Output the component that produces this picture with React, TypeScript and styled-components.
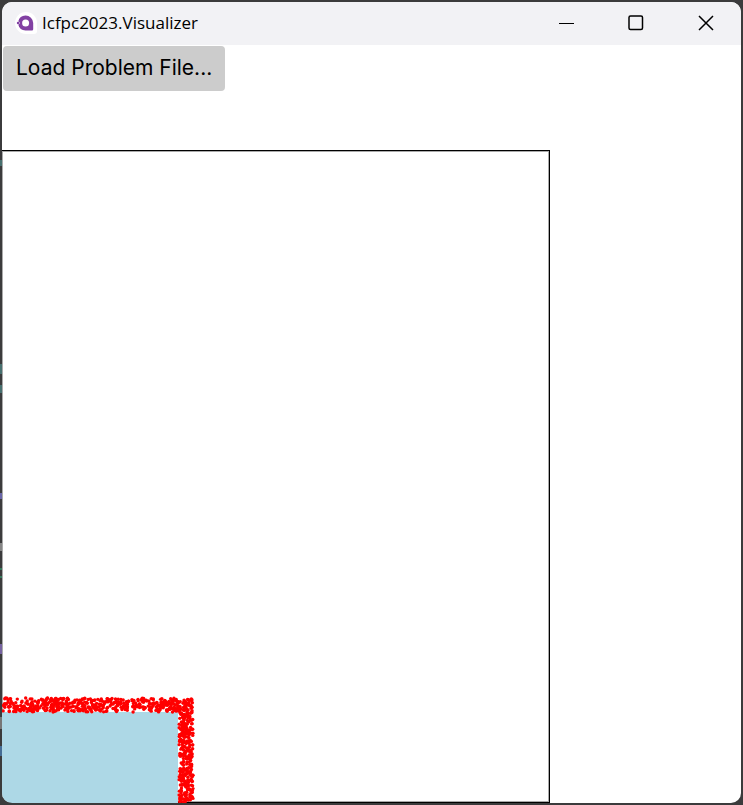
import React from "react";
import styled, { createGlobalStyle } from "styled-components";

const GlobalStyle = createGlobalStyle`
  *, *::before, *::after { box-sizing: border-box; }
  body { margin: 0; background: #3b3b3c; }
`;

const Desktop = styled.div`
  height: 100vh;
  padding: 2px;
  background:
    linear-gradient(#47706f, #47706f) 0 160px / 2px 6px no-repeat,
    linear-gradient(#47706f, #47706f) 0 364px / 2px 10px no-repeat,
    linear-gradient(#47706f, #47706f) 0 385px / 2px 8px no-repeat,
    linear-gradient(#6965a8, #6965a8) 0 493px / 2px 6px no-repeat,
    linear-gradient(#858585, #858585) 0 543px / 2px 8px no-repeat,
    linear-gradient(#367a5c, #367a5c) 0 568px / 2px 2px no-repeat,
    linear-gradient(#367a5c, #367a5c) 0 576px / 2px 2px no-repeat,
    linear-gradient(#7663a0, #7663a0) 0 644px / 2px 10px no-repeat,
    linear-gradient(#777, #777) 0 717px / 2px 12px no-repeat,
    linear-gradient(#456d95, #456d95) 0 746px / 2px 10px no-repeat,
    #3b3b3c;
`;

const Window = styled.main`
  display: flex;
  flex-direction: column;
  height: 100%;
  overflow: hidden;
  border-radius: 10px;
  background: #fff;
  color: #000;
`;

const TitleBar = styled.header`
  display: flex;
  flex: none;
  align-items: center;
  height: 43px;
  padding: 0 0 2px 13px;
  background: #f2f2f5;
`;

const Title = styled.h1`
  flex: 1;
  margin: 0 0 0 5px;
  font: 400 17px/24px "Open Sans", "Noto Sans", sans-serif;
  white-space: nowrap;
`;

const CaptionButton = styled.button`
  display: grid;
  place-items: center;
  width: 70px;
  height: 41px;
  padding: 0;
  border: 0;
  background: transparent;
  color: #000;
`;

const Toolbar = styled.div`
  display: flex;
  flex: none;
  padding: 1px;
`;

const LoadButton = styled.button`
  height: 45px;
  padding: 0 13px 2px;
  border: 0;
  border-radius: 4px;
  background: #ccc;
  color: #000;
  font: 400 21px/28px Inter, sans-serif;
  white-space: nowrap;
`;

const Room = styled.section`
  display: flex;
  flex: 1;
  align-items: flex-end;
  width: 74.2%;
  min-height: 0;
  margin-top: 58px;
  border: 1px solid #000;
  border-left: 0;
  box-shadow: inset 0 0 0 1px #aaa;
`;

const Plot = styled.svg`
  display: block;
  flex: none;
  margin-bottom: -1px;
`;

const STAGE = { width: 176, height: 91 };
const BAND = 16;

type Dot = { x: number; y: number };

function makeRandom(seed: number) {
  let state = seed;
  return () => {
    state = (state + 0x6d2b79f5) | 0;
    let t = Math.imul(state ^ (state >>> 15), 1 | state);
    t = (t + Math.imul(t ^ (t >>> 7), 61 | t)) ^ t;
    return ((t ^ (t >>> 14)) >>> 0) / 4294967296;
  };
}

function scatter(count: number, x: number, y: number, w: number, h: number, seed: number): Dot[] {
  const random = makeRandom(seed);
  return Array.from({ length: count }, () => ({ x: x + random() * w, y: y + random() * h }));
}

const attendees: Dot[] = [
  ...scatter(540, 1, 2, STAGE.width + BAND - 2, BAND - 2, 41),
  ...scatter(300, STAGE.width + 1, BAND, BAND - 2, STAGE.height - 1, 97),
];

function AppIcon() {
  return (
    <svg width="22" height="22" viewBox="0 0 22 22" aria-hidden="true">
      <path d="M11 0a11 11 0 1 0 0 22h8a3 3 0 0 0 3-3v-8A11 11 0 0 0 11 0Z" fill="#fff" />
      <path d="M10.5 3.5A7.5 7.5 0 0 0 3.3 9.2L5 11l-1.7 1.8A7.5 7.5 0 0 0 10.5 18.5H17a1.2 1.2 0 0 0 1.2-1.2V11A7.6 7.6 0 0 0 10.5 3.5Z" fill="#8241a3" />
      <circle cx="10.6" cy="10.9" r="3.5" fill="#fff" />
      <circle cx="3" cy="11" r="1.2" fill="#8241a3" />
    </svg>
  );
}

function Stage() {
  return (
    <Plot width={STAGE.width + BAND + 2} height={STAGE.height + BAND} role="img" aria-label="Stage and attendees">
      <rect x="0" y={BAND} width={STAGE.width} height={STAGE.height} fill="#add8e6" />
      <g fill="#f00">
        {attendees.map((dot, index) => (
          <circle key={index} cx={dot.x} cy={dot.y} r="1.7" />
        ))}
      </g>
    </Plot>
  );
}

export default function App() {
  return (
    <>
      <GlobalStyle />
      <Desktop>
        <Window>
          <TitleBar>
            <AppIcon />
            <Title>Icfpc2023.Visualizer</Title>
            <CaptionButton type="button" aria-label="Minimize">
              <svg width="16" height="16" viewBox="0 0 16 16">
                <path d="M1 8.5h15" stroke="currentColor" />
              </svg>
            </CaptionButton>
            <CaptionButton type="button" aria-label="Maximize">
              <svg width="16" height="16" viewBox="0 0 16 16" fill="none">
                <rect x="1" y="1" width="13.5" height="13.5" rx="1.5" stroke="currentColor" strokeWidth="1.5" />
              </svg>
            </CaptionButton>
            <CaptionButton type="button" aria-label="Close">
              <svg width="16" height="16" viewBox="0 0 16 16" fill="none">
                <path d="M1 1l14 14M15 1L1 15" stroke="currentColor" strokeWidth="1.5" />
              </svg>
            </CaptionButton>
          </TitleBar>
          <Toolbar>
            <LoadButton type="button">Load Problem File...</LoadButton>
          </Toolbar>
          <Room>
            <Stage />
          </Room>
        </Window>
      </Desktop>
    </>
  );
}
